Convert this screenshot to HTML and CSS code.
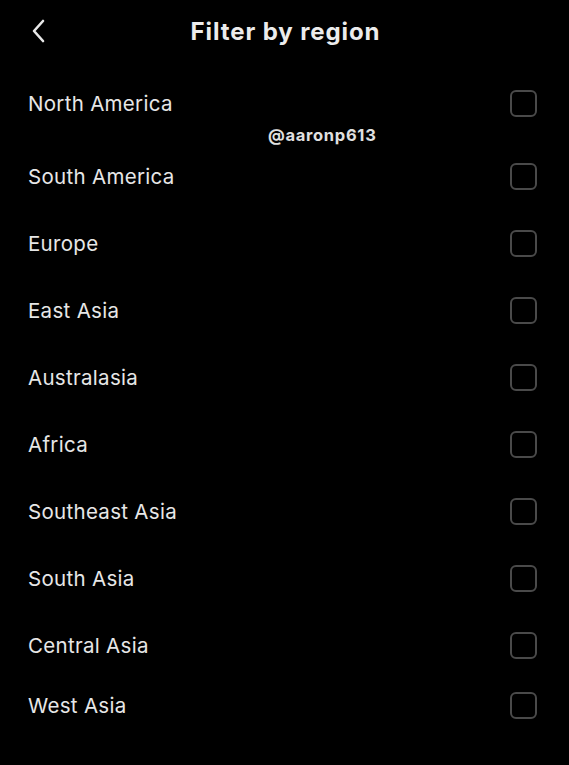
FILE: index.html
```html
<!DOCTYPE html>
<html lang="en">
<head>
    <meta charset="UTF-8">
    <meta name="viewport" content="width=device-width, initial-scale=1.0">
    <title>Filter by region</title>
    <link rel="stylesheet" href="styles.css">
</head>
<body>
    <div class="screen">
        <header class="top-bar">
            <button class="back-btn" aria-label="Back">
                <svg width="16" height="24" viewBox="0 0 16 24" fill="none">
                    <path d="M12 2 L3 12 L12 22" stroke="#e8e8e8" stroke-width="2.6" stroke-linecap="round" stroke-linejoin="round"/>
                </svg>
            </button>
            <h1>Filter by region</h1>
        </header>

        <ul class="region-list">
            <li class="region first">
                <span>North America</span>
                <span class="check"></span>
            </li>
            <li class="region">
                <span>South America</span>
                <span class="check"></span>
            </li>
            <li class="region">
                <span>Europe</span>
                <span class="check"></span>
            </li>
            <li class="region">
                <span>East Asia</span>
                <span class="check"></span>
            </li>
            <li class="region">
                <span>Australasia</span>
                <span class="check"></span>
            </li>
            <li class="region">
                <span>Africa</span>
                <span class="check"></span>
            </li>
            <li class="region">
                <span>Southeast Asia</span>
                <span class="check"></span>
            </li>
            <li class="region">
                <span>South Asia</span>
                <span class="check"></span>
            </li>
            <li class="region">
                <span>Central Asia</span>
                <span class="check"></span>
            </li>
            <li class="region last">
                <span>West Asia</span>
                <span class="check"></span>
            </li>
        </ul>

        <div class="watermark">@aaronp613</div>
    </div>
</body>
</html>
```

FILE: styles.css
```css
body {
    margin: 0;
    padding: 0;
    background: #000;
    color: #e7e7e7;
    font-family: 'Inter', 'Roboto', sans-serif;
}
.screen {
    position: relative;
    width: 569px;
    height: 765px;
    overflow: hidden;
}
.top-bar {
    position: relative;
    height: 62px;
    display: flex;
    align-items: center;
    justify-content: center;
}
.top-bar h1 {
    margin: 0 0 0 2px;
    font-size: 24px;
    font-weight: 700;
    color: #ececec;
    letter-spacing: 0.9px;
}
.back-btn {
    position: absolute;
    left: 31px;
    top: 19px;
    background: none;
    border: none;
    padding: 0;
    cursor: pointer;
}
.region-list {
    list-style: none;
    margin: 0;
    padding: 8px 32px 0 28px;
}
.region {
    height: 67px;
    display: flex;
    align-items: center;
    justify-content: space-between;
    font-size: 20.5px;
    letter-spacing: 0.3px;
}
.region.first {
    margin-bottom: 6px;
}
.region.last {
    margin-top: -7px;
}
.check {
    width: 23px;
    height: 23px;
    border: 2px solid #4a4a4a;
    border-radius: 6px;
}
.watermark {
    position: absolute;
    left: 268px;
    top: 125px;
    font-size: 16.5px;
    font-weight: 700;
    letter-spacing: 0.7px;
    color: #e0e0e0;
}
```
